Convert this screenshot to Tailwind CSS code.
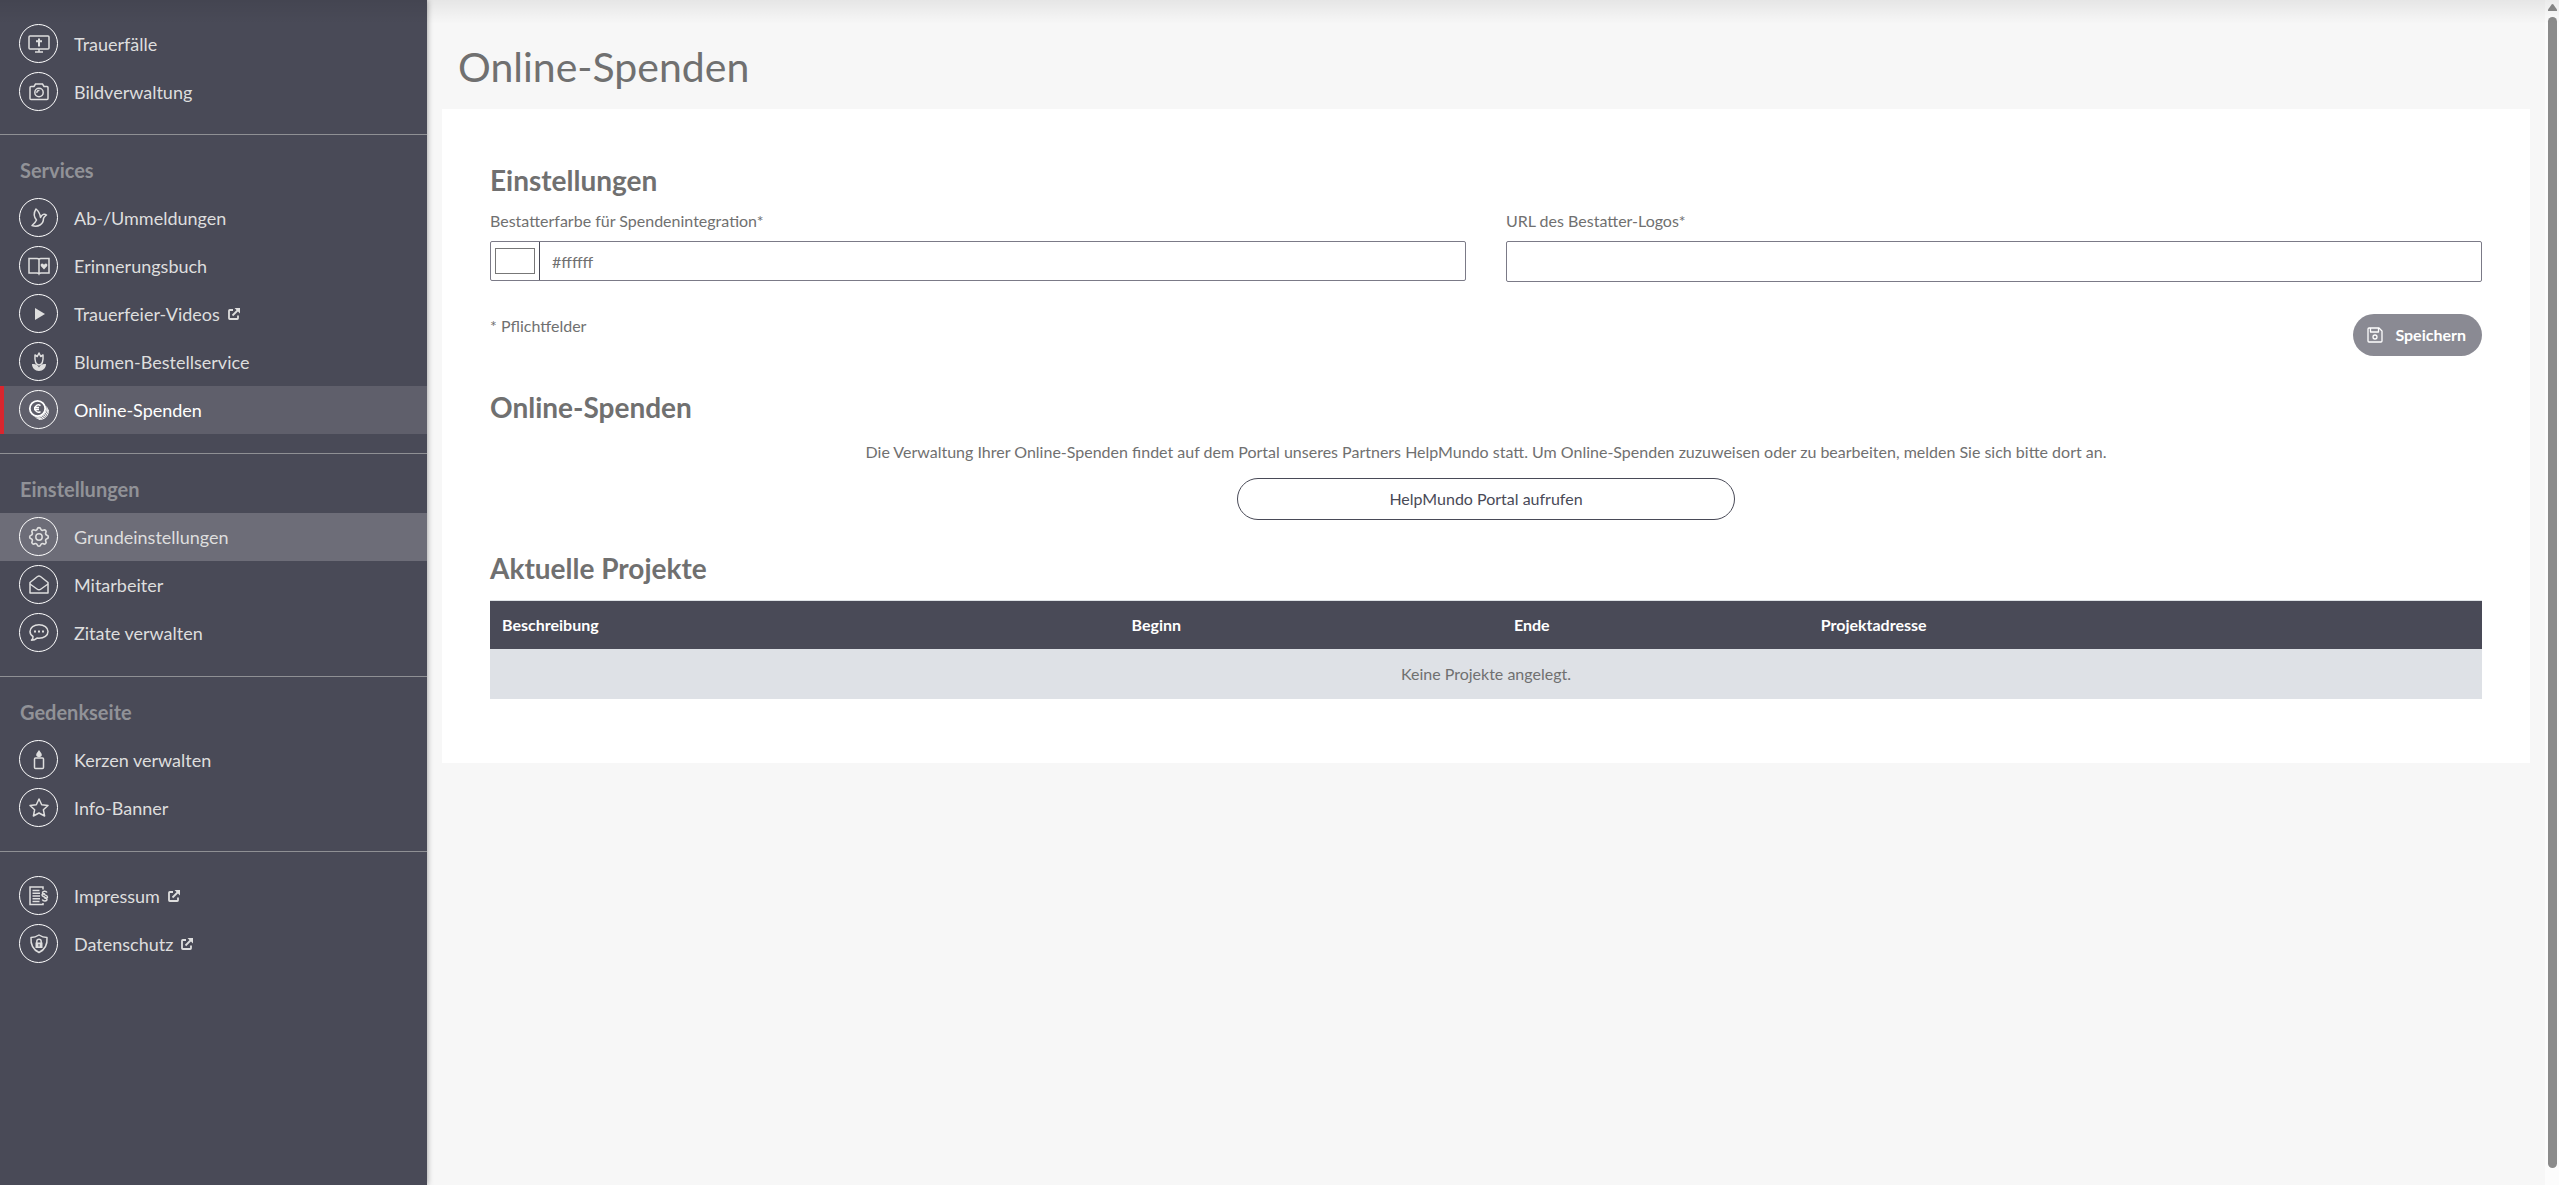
<!DOCTYPE html>
<html lang="de">
<head>
    <meta charset="UTF-8">
    <meta name="viewport" content="width=device-width, initial-scale=1.0">
    <title>Online-Spenden</title>
    <script src="https://cdn.jsdelivr.net/npm/@tailwindcss/browser@4"></script>
</head>
<body class="bg-[#f7f7f7] font-['Lato','Open_Sans',sans-serif] text-base text-[#707070]">

<!-- Icon für externe Links -->
<svg class="hidden">
    <symbol id="extern" viewBox="0 0 12 12">
        <path d="M5 2H1.8Q1 2 1 2.8V10.200Q1 11 1.800 11H9.200Q10 11 10 10.200V7.500" fill="none" stroke="currentColor" stroke-width="1.8"/>
        <path d="M4.500 7.500L10 2" fill="none" stroke="currentColor" stroke-width="1.8"/>
        <path d="M6.500 0H12V5.500Z" fill="currentColor"/>
    </symbol>
</svg>

<div class="relative flex min-h-screen">

    <!-- Schatten der Kopfleiste -->
    <div class="pointer-events-none absolute inset-x-0 top-0 z-20 h-6 bg-linear-to-b from-black/7 to-transparent"></div>

    <!-- Sidebar -->
    <nav class="z-10 w-[427px] shrink-0 bg-[#494a57] text-lg text-[#dedede] shadow-[0_0_6px_rgba(0,0,0,0.4)]">
        <ul class="border-b border-[#8f9094] pt-5 pb-[18px]">
            <li>
                <a href="#" class="flex h-12 items-center gap-4 pb-px pl-[19px]">
                    <span class="flex size-[39px] items-center justify-center rounded-full border border-white">
                        <svg class="size-[22px]" viewBox="0 0 22 22" fill="none" stroke="currentColor" stroke-width="1.5"><rect x="1" y="3" width="20" height="13" rx="1"/><path d="M11 16v3M7 19h8"/><path d="M11 5.500v8M8 8.200h6" stroke-width="2"/></svg>
                    </span>
                    Trauerfälle
                </a>
            </li>
            <li>
                <a href="#" class="flex h-12 items-center gap-4 pb-px pl-[19px]">
                    <span class="flex size-[39px] items-center justify-center rounded-full border border-white">
                        <svg class="size-[22px]" viewBox="0 0 22 22" fill="none" stroke="currentColor" stroke-width="1.5"><path d="M2 6.500Q2 5.500 3 5.500H6L7.500 3H14.500L16 5.500H19Q20 5.500 20 6.500V17.500Q20 18.500 19 18.500H3Q2 18.500 2 17.500Z"/><circle cx="11" cy="11.500" r="4.200"/><path d="M9 12a2 2 0 0 1 2.500-2.500"/></svg>
                    </span>
                    Bildverwaltung
                </a>
            </li>
        </ul>

        <h3 class="flex h-[59px] items-center px-5 pt-2.5 text-xl font-bold text-[#919297]">Services</h3>
        <ul class="border-b border-[#8f9094] pb-[19px]">
            <li>
                <a href="#" class="flex h-12 items-center gap-4 pb-px pl-[19px]">
                    <span class="flex size-[39px] items-center justify-center rounded-full border border-white">
                        <svg class="size-[22px]" viewBox="0 0 22 22" fill="none" stroke="currentColor" stroke-width="1.500" stroke-linejoin="round"><path d="M8 2C5.500 6 5.500 9.500 8.500 13C7.500 15.500 6 17 4 18.500C10 20.500 15.500 17.500 15.500 11.500C16 9.500 17.500 9 18.500 8C16.500 6.500 14 7 12.500 10.500C12 7 10.500 4 8 2Z"/></svg>
                    </span>
                    Ab-/Ummeldungen
                </a>
            </li>
            <li>
                <a href="#" class="flex h-12 items-center gap-4 pb-px pl-[19px]">
                    <span class="flex size-[39px] items-center justify-center rounded-full border border-white">
                        <svg class="size-[22px]" viewBox="0 0 22 22" fill="none" stroke="currentColor" stroke-width="1.500"><path d="M11 4.500Q10.500 3.500 9 3.500H1V18H9Q10.500 18 11 19Q11.500 18 13 18H21V3.500H13Q11.500 3.500 11 4.500V19"/><path d="M16 14.500L12.800 11Q12 9 13.800 8.500Q15.200 8.500 16 9.800Q16.800 8.500 18.200 8.500Q20 9 19.200 11Z" fill="currentColor" stroke="none"/></svg>
                    </span>
                    Erinnerungsbuch
                </a>
            </li>
            <li>
                <a href="#" class="flex h-12 items-center gap-4 pb-px pl-[19px]">
                    <span class="flex size-[39px] items-center justify-center rounded-full border border-white">
                        <svg class="size-[22px]" viewBox="0 0 22 22" fill="currentColor"><path d="M7 5L17 11L7 17Z"/></svg>
                    </span>
                    <span class="flex items-center gap-2">Trauerfeier-Videos <svg class="size-3"><use href="#extern"/></svg></span>
                </a>
            </li>
            <li>
                <a href="#" class="flex h-12 items-center gap-4 pb-px pl-[19px]">
                    <span class="flex size-[39px] items-center justify-center rounded-full border border-white">
                        <svg class="size-[22px]" viewBox="0 0 22 22" fill="none" stroke="currentColor" stroke-width="1.500" stroke-linejoin="round"><path d="M11 14C7 13.500 6.500 10 7 4L9.300 5.500L11 2L12.700 5.500L15 4C15.500 10 15 13.500 11 14Z"/><path d="M4 13C7.500 12.500 10 14 11 16.500C12 14 14.500 12.500 18 13C18 17 15 20 11 20C7 20 4 17 4 13Z" fill="currentColor" stroke="none"/></svg>
                    </span>
                    Blumen-Bestellservice
                </a>
            </li>
            <li>
                <a href="#" class="flex h-12 items-center gap-4 border-l-4 border-[#d9262e] bg-[#5f5f6b] pb-px pl-[15px] text-white">
                    <span class="flex size-[39px] items-center justify-center rounded-full border border-white">
                        <svg class="size-[22px]" viewBox="0 0 22 22" fill="none" stroke="currentColor" stroke-width="1.500"><circle cx="9.500" cy="9.500" r="7.700" stroke-width="1.800"/><path d="M12.500 6.500A3.600 3.600 0 1 0 12.500 12.500M6 8.600H11M6 10.600H11"/><path d="M17.800 7A8.300 8.300 0 0 1 7 17.800M19.200 8.500A8.600 8.600 0 0 1 8.500 19.200M20.300 10.500A8.500 8.500 0 0 1 10.500 20.300" stroke-width="1"/></svg>
                    </span>
                    Online-Spenden
                </a>
            </li>
        </ul>

        <h3 class="flex h-[59px] items-center px-5 pt-2.5 text-xl font-bold text-[#919297]">Einstellungen</h3>
        <ul class="border-b border-[#8f9094] pb-[19px]">
            <li>
                <a href="#" class="flex h-12 items-center gap-4 bg-[#6d6d78] pb-px pl-[19px]">
                    <span class="flex size-[39px] items-center justify-center rounded-full border border-white">
                        <svg class="size-[22px]" viewBox="0 0 24 24" fill="none" stroke="currentColor" stroke-width="1.600" stroke-linejoin="round"><path d="M10.300 4.300c.4-1.750 3-1.750 3.400 0a1.724 1.724 0 0 0 2.570 1.070c1.540-.94 3.310.83 2.370 2.370a1.724 1.724 0 0 0 1.060 2.570c1.760.42 1.760 2.920 0 3.350a1.724 1.724 0 0 0-1.060 2.570c.94 1.540-.83 3.310-2.370 2.370a1.724 1.724 0 0 0-2.570 1.060c-.42 1.760-2.920 1.760-3.350 0a1.724 1.724 0 0 0-2.570-1.060c-1.540.94-3.310-.83-2.370-2.370a1.724 1.724 0 0 0-1.060-2.570c-1.760-.42-1.760-2.920 0-3.350a1.724 1.724 0 0 0 1.060-2.570c-.94-1.540.83-3.310 2.370-2.370 1 .6 2.300.07 2.570-1.070z" transform="translate(-1.600 -1.600) scale(1.130)"/><circle cx="12" cy="12" r="3.500"/></svg>
                    </span>
                    Grundeinstellungen
                </a>
            </li>
            <li>
                <a href="#" class="flex h-12 items-center gap-4 pb-px pl-[19px]">
                    <span class="flex size-[39px] items-center justify-center rounded-full border border-white">
                        <svg class="size-[22px]" viewBox="0 0 22 22" fill="none" stroke="currentColor" stroke-width="1.500" stroke-linejoin="round"><path d="M2 8.500L9.500 2.500Q11 1.500 12.500 2.500L20 8.500V19H2Z"/><path d="M2 10L9 15Q11 16.500 13 15L20 10"/></svg>
                    </span>
                    Mitarbeiter
                </a>
            </li>
            <li>
                <a href="#" class="flex h-12 items-center gap-4 pb-px pl-[19px]">
                    <span class="flex size-[39px] items-center justify-center rounded-full border border-white">
                        <svg class="size-[22px]" viewBox="0 0 22 22" fill="none" stroke="currentColor" stroke-width="1.500" stroke-linejoin="round"><path d="M5 14.500C3 13.200 2 11.500 2 9.500C2 5.500 6 2.800 11 2.800S20 5.500 20 9.500S16 16.200 11 16.200C10.300 16.200 9.700 16.200 9 16.100C7.500 17.500 5.500 18.200 3.500 18.200C4.700 17.200 5.200 16 5 14.500Z"/><path d="M6 9.500H8M10 9.500H12M14 9.500H16" stroke-width="2.200"/></svg>
                    </span>
                    Zitate verwalten
                </a>
            </li>
        </ul>

        <h3 class="flex h-[59px] items-center px-5 pt-2.5 text-xl font-bold text-[#919297]">Gedenkseite</h3>
        <ul class="border-b border-[#8f9094] pb-[19px]">
            <li>
                <a href="#" class="flex h-12 items-center gap-4 pb-px pl-[19px]">
                    <span class="flex size-[39px] items-center justify-center rounded-full border border-white">
                        <svg class="size-[22px]" viewBox="0 0 22 22" fill="none" stroke="currentColor" stroke-width="1.500"><rect x="6.500" y="9" width="9" height="10.500" rx="1"/><path d="M11 1C12.500 3 13.800 4.500 13.800 6C13.800 7.500 12.500 8 11 8S8.200 7.500 8.200 6C8.200 4.500 9.500 3 11 1Z" fill="currentColor" stroke="none"/></svg>
                    </span>
                    Kerzen verwalten
                </a>
            </li>
            <li>
                <a href="#" class="flex h-12 items-center gap-4 pb-px pl-[19px]">
                    <span class="flex size-[39px] items-center justify-center rounded-full border border-white">
                        <svg class="size-[22px]" viewBox="0 0 22 22" fill="none" stroke="currentColor" stroke-width="1.500" stroke-linejoin="round"><path d="M11 2L13.700 7.700L20 8.500L15.400 12.800L16.600 19L11 16L5.400 19L6.600 12.800L2 8.500L8.300 7.700Z"/></svg>
                    </span>
                    Info-Banner
                </a>
            </li>
        </ul>

        <ul class="pt-5 pb-[18px]">
            <li>
                <a href="#" class="flex h-12 items-center gap-4 pb-px pl-[19px]">
                    <span class="flex size-[39px] items-center justify-center rounded-full border border-white">
                        <svg class="size-[22px]" viewBox="0 0 22 22" fill="none" stroke="currentColor" stroke-width="1.500"><path d="M15 4.500V2H2V19.500H15V18"/><path d="M4.500 5.500H11.500M4.500 8.200H12M4.500 11H12M4.500 13.700H12M4.500 16.400H11.500"/><path d="M19 7.500C18 5.500 14.500 5.800 14.500 7.800C14.500 10 19.500 9.800 19.500 12C19.500 13.500 17.500 13.500 16.500 13M14.300 14.500C15.200 16.500 19 16.300 19 14.300C19 12 14 12 14 10C14 8.700 15.800 8.500 17 9"/></svg>
                    </span>
                    <span class="flex items-center gap-2">Impressum <svg class="size-3"><use href="#extern"/></svg></span>
                </a>
            </li>
            <li>
                <a href="#" class="flex h-12 items-center gap-4 pb-px pl-[19px]">
                    <span class="flex size-[39px] items-center justify-center rounded-full border border-white">
                        <svg class="size-[22px]" viewBox="0 0 22 22" fill="none" stroke="currentColor" stroke-width="1.500" stroke-linejoin="round"><path d="M11 2C13.500 3.700 16 4.500 19 4.500C19.500 11 17.500 16.500 11 19.500C4.500 16.500 2.500 11 3 4.500C6 4.500 8.500 3.700 11 2Z"/><path d="M8.800 10V8.500a2.200 2.200 0 0 1 4.400 0V10"/><path d="M7.500 9.500h7v5.500h-7zM10.500 11v2.500h1V11z" fill="currentColor" fill-rule="evenodd" stroke="none"/></svg>
                    </span>
                    <span class="flex items-center gap-2">Datenschutz <svg class="size-3"><use href="#extern"/></svg></span>
                </a>
            </li>
        </ul>
    </nav>

    <!-- Inhalt -->
    <main class="min-w-0 flex-1 px-[15px]">
        <h1 class="flex h-[109px] items-center px-4 pt-6 text-[41px]">Online-Spenden</h1>

        <div class="bg-white px-12 pt-[55px] pb-16">
            <form>
                <h2 class="text-[28px] leading-8 font-bold">Einstellungen</h2>
                <div class="mt-[13px] grid grid-cols-2 gap-10">
                    <div>
                        <label for="farbe" class="block leading-6">Bestatterfarbe für Spendenintegration*</label>
                        <div class="mt-2 flex h-10 rounded-xs border border-[#7b7a87]">
                            <input type="color" id="farbwahl" aria-label="Farbe wählen" value="#ffffff" class="h-full w-[49px] border-r border-[#494a57] p-0.5">
                            <input type="text" id="farbe" value="#ffffff" class="h-full min-w-0 flex-1 px-3 outline-none">
                        </div>
                    </div>
                    <div>
                        <label for="logo" class="block leading-6">URL des Bestatter-Logos*</label>
                        <input type="text" id="logo" class="mt-2 h-[41px] w-full rounded-xs border border-[#7b7a87] px-3 outline-none">
                    </div>
                </div>
                <div class="mt-8 flex items-start justify-between">
                    <p class="leading-6">* Pflichtfelder</p>
                    <button type="button" class="flex h-[42px] items-center gap-3 rounded-full bg-[#8a8a93] pr-4 pl-[14px] font-bold text-white">
                        <svg class="size-4" viewBox="0 0 16 16" fill="none" stroke="currentColor" stroke-width="1.300" stroke-linejoin="round"><path d="M2 1H12L15 4V14Q15 15 14 15H2Q1 15 1 14V2Q1 1 2 1Z"/><path d="M3.500 1V5H11.500V1"/><circle cx="8" cy="10" r="2"/></svg>
                        Speichern
                    </button>
                </div>
            </form>

            <h2 class="mt-[35px] text-[28px] leading-8 font-bold">Online-Spenden</h2>
            <p class="mt-[17px] text-center leading-6">Die Verwaltung Ihrer Online-Spenden findet auf dem Portal unseres Partners HelpMundo statt. Um Online-Spenden zuzuweisen oder zu bearbeiten, melden Sie sich bitte dort an.</p>
            <a href="#" class="mx-auto mt-3.5 flex h-[42px] w-1/4 items-center justify-center rounded-full border border-[#494a57] text-[#494a57]">HelpMundo Portal aufrufen</a>

            <h2 class="mt-8 text-[28px] leading-8 font-bold">Aktuelle Projekte</h2>
            <table class="mt-4 w-full table-fixed border-t border-[#dee2e6]">
                <thead class="bg-[#494a57] text-left text-white">
                    <tr class="h-12">
                        <th class="w-[31.6%] px-3">Beschreibung</th>
                        <th class="w-[19.2%] px-3">Beginn</th>
                        <th class="w-[15.4%] px-3">Ende</th>
                        <th class="px-3">Projektadresse</th>
                    </tr>
                </thead>
                <tbody>
                    <tr class="h-[50px] bg-[#dee1e6]">
                        <td colspan="4" class="text-center">Keine Projekte angelegt.</td>
                    </tr>
                </tbody>
            </table>
        </div>
    </main>

    <!-- Scrollleiste -->
    <div class="flex w-[14px] shrink-0 flex-col items-center gap-1.5 bg-[#fcfcfc] pt-1 pb-[17px]">
        <svg class="h-[7px] w-[9px]" viewBox="0 0 9 7" fill="#8b8b8b"><path d="M3.700 .5Q4.500 -.3 5.300 .5L9 5.500V7H0V5.500Z"/></svg>
        <div class="w-[9px] flex-1 rounded-full bg-[#8b8b8b]"></div>
    </div>
</div>

</body>
</html>
